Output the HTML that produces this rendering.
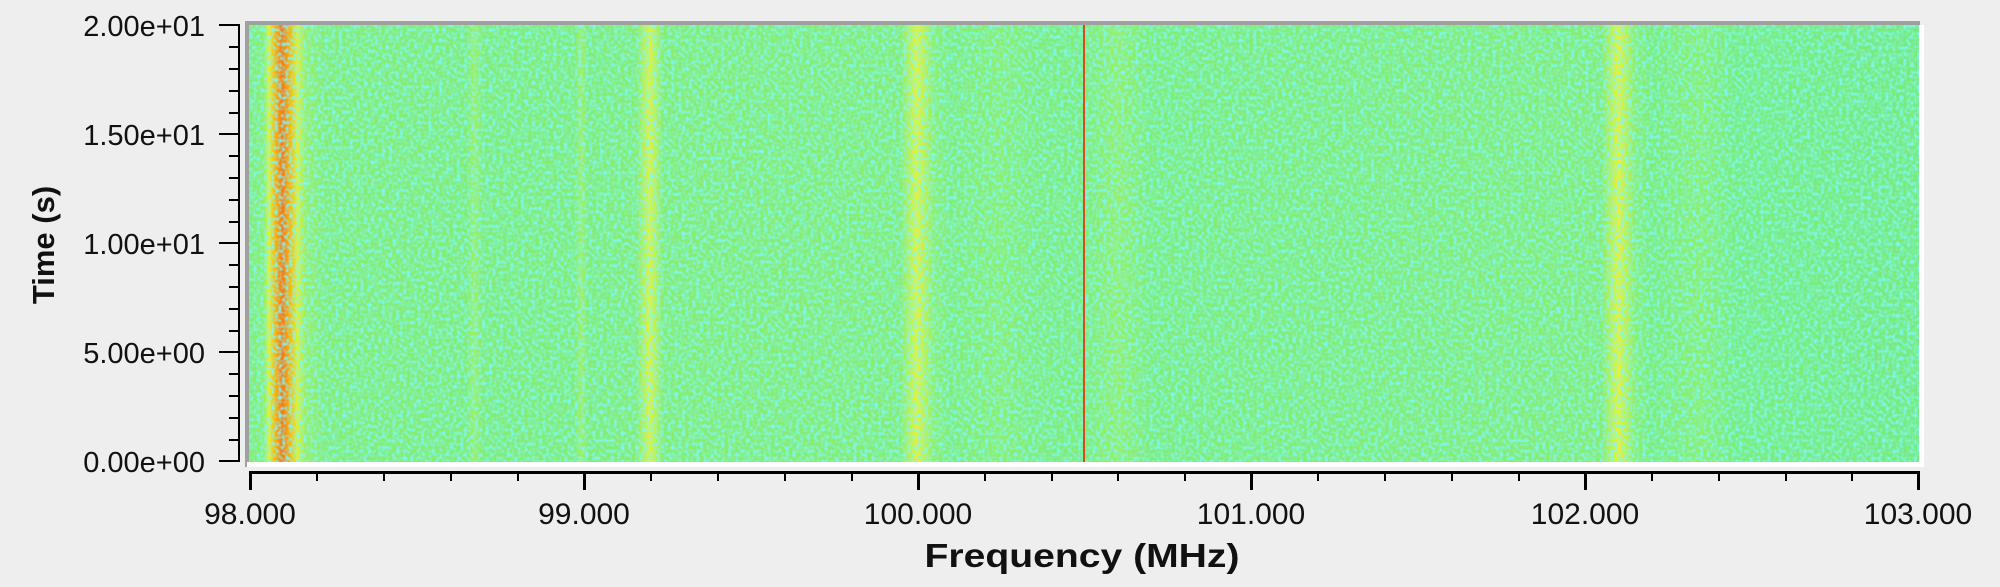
<!DOCTYPE html>
<html><head><meta charset="utf-8"><style>
html,body{margin:0;padding:0;background:#eeeeee;width:2000px;height:587px;overflow:hidden}
svg{display:block}
text{font-family:"Liberation Sans",sans-serif;fill:#111}
</style></head><body>
<svg width="2000" height="587" viewBox="0 0 2000 587" xmlns="http://www.w3.org/2000/svg">
<defs>
<linearGradient id="bands" x1="249" x2="1919" y1="0" y2="0" gradientUnits="userSpaceOnUse">
<stop offset="0" stop-color="#84ec76"/>
<stop offset="0.009" stop-color="#90ee6e"/>
<stop offset="0.012" stop-color="#e8f030"/>
<stop offset="0.016" stop-color="#f8b010"/>
<stop offset="0.020" stop-color="#f47818"/>
<stop offset="0.024" stop-color="#f8b010"/>
<stop offset="0.029" stop-color="#e0f038"/>
<stop offset="0.034" stop-color="#9cee66"/>
<stop offset="0.045" stop-color="#88ec74"/>
<stop offset="0.13" stop-color="#84ec76"/>
<stop offset="0.135" stop-color="#a0ee66"/>
<stop offset="0.14" stop-color="#84ec76"/>
<stop offset="0.195" stop-color="#84ec76"/>
<stop offset="0.199" stop-color="#a4ee64"/>
<stop offset="0.203" stop-color="#84ec76"/>
<stop offset="0.232" stop-color="#88ec74"/>
<stop offset="0.240" stop-color="#e4f23a"/>
<stop offset="0.248" stop-color="#88ec74"/>
<stop offset="0.390" stop-color="#88ec74"/>
<stop offset="0.400" stop-color="#e6f238"/>
<stop offset="0.410" stop-color="#92ee6e"/>
<stop offset="0.42" stop-color="#84ec76"/>
<stop offset="0.45" stop-color="#8eee6e"/>
<stop offset="0.47" stop-color="#84ec76"/>
<stop offset="0.50" stop-color="#82ec78"/>
<stop offset="0.52" stop-color="#98ee68"/>
<stop offset="0.54" stop-color="#82ec78"/>
<stop offset="0.81" stop-color="#88ec74"/>
<stop offset="0.820" stop-color="#eaf236"/>
<stop offset="0.830" stop-color="#8eee6e"/>
<stop offset="0.84" stop-color="#80ec78"/>
<stop offset="0.87" stop-color="#8eee6e"/>
<stop offset="0.89" stop-color="#7cec7c"/>
<stop offset="1" stop-color="#7aea7e"/>
</linearGradient>
<filter id="noise" x="0" y="0" width="100%" height="100%">
<feTurbulence type="fractalNoise" baseFrequency="0.28" numOctaves="1" seed="3" result="n"/>
<feColorMatrix in="n" type="matrix" values="0 0 0 0 0.2  0 0 0 0 0.95  0 0 0 0 1  3 0 0 0 -1.2" />
</filter>
</defs>
<rect x="245" y="21" width="1675" height="4" fill="#a0a0a0"/>
<rect x="245" y="21" width="4" height="446" fill="#a0a0a0"/>
<rect x="247" y="462" width="1677" height="5" fill="#ffffff"/>
<rect x="1919" y="25" width="5" height="442" fill="#ffffff"/>
<rect x="249" y="25" width="1670" height="437" fill="url(#bands)"/>
<rect x="249" y="25" width="1670" height="437" filter="url(#noise)" opacity="0.85"/>
<rect x="1083" y="25" width="2" height="437" fill="#e04820"/>
<g fill="#000">
<rect x="238" y="24" width="2" height="438"/>
<rect x="219" y="24" width="20" height="2"/>
<rect x="219" y="133" width="20" height="2"/>
<rect x="219" y="242" width="20" height="2"/>
<rect x="219" y="351" width="20" height="2"/>
<rect x="219" y="460" width="20" height="2"/>
<rect x="229" y="46" width="10" height="2"/><rect x="229" y="68" width="10" height="2"/><rect x="229" y="90" width="10" height="2"/><rect x="229" y="112" width="10" height="2"/>
<rect x="229" y="155" width="10" height="2"/><rect x="229" y="177" width="10" height="2"/><rect x="229" y="199" width="10" height="2"/><rect x="229" y="221" width="10" height="2"/>
<rect x="229" y="264" width="10" height="2"/><rect x="229" y="286" width="10" height="2"/><rect x="229" y="308" width="10" height="2"/><rect x="229" y="330" width="10" height="2"/>
<rect x="229" y="373" width="10" height="2"/><rect x="229" y="395" width="10" height="2"/><rect x="229" y="417" width="10" height="2"/><rect x="229" y="439" width="10" height="2"/>
</g>
<g font-size="29" text-anchor="end">
<text x="205" y="36">2.00e+01</text>
<text x="205" y="145">1.50e+01</text>
<text x="205" y="254">1.00e+01</text>
<text x="205" y="363">5.00e+00</text>
<text x="205" y="472">0.00e+00</text>
</g>
<text transform="translate(54,245) rotate(-90)" font-size="31" font-weight="bold" text-anchor="middle">Time (s)</text>
<g fill="#000">
<rect x="249" y="471" width="1671" height="3"/>
<rect x="249" y="471" width="3" height="19"/>
<rect x="583" y="471" width="3" height="19"/>
<rect x="917" y="471" width="3" height="19"/>
<rect x="1250" y="471" width="3" height="19"/>
<rect x="1584" y="471" width="3" height="19"/>
<rect x="1917" y="471" width="3" height="19"/>
<g>
<rect x="316" y="471" width="2" height="10"/><rect x="383" y="471" width="2" height="10"/><rect x="450" y="471" width="2" height="10"/><rect x="517" y="471" width="2" height="10"/>
<rect x="650" y="471" width="2" height="10"/><rect x="717" y="471" width="2" height="10"/><rect x="784" y="471" width="2" height="10"/><rect x="851" y="471" width="2" height="10"/>
<rect x="984" y="471" width="2" height="10"/><rect x="1051" y="471" width="2" height="10"/><rect x="1117" y="471" width="2" height="10"/><rect x="1184" y="471" width="2" height="10"/>
<rect x="1317" y="471" width="2" height="10"/><rect x="1384" y="471" width="2" height="10"/><rect x="1451" y="471" width="2" height="10"/><rect x="1518" y="471" width="2" height="10"/>
<rect x="1651" y="471" width="2" height="10"/><rect x="1718" y="471" width="2" height="10"/><rect x="1785" y="471" width="2" height="10"/><rect x="1851" y="471" width="2" height="10"/>
</g>
</g>
<g font-size="30" text-anchor="middle">
<text x="250" y="524">98.000</text>
<text x="584" y="524">99.000</text>
<text x="918" y="524">100.000</text>
<text x="1251" y="524">101.000</text>
<text x="1585" y="524">102.000</text>
<text x="1918" y="524">103.000</text>
</g>
<text x="1082" y="567" font-size="33" font-weight="bold" text-anchor="middle" textLength="315" lengthAdjust="spacingAndGlyphs">Frequency (MHz)</text>
</svg>
</body></html>
